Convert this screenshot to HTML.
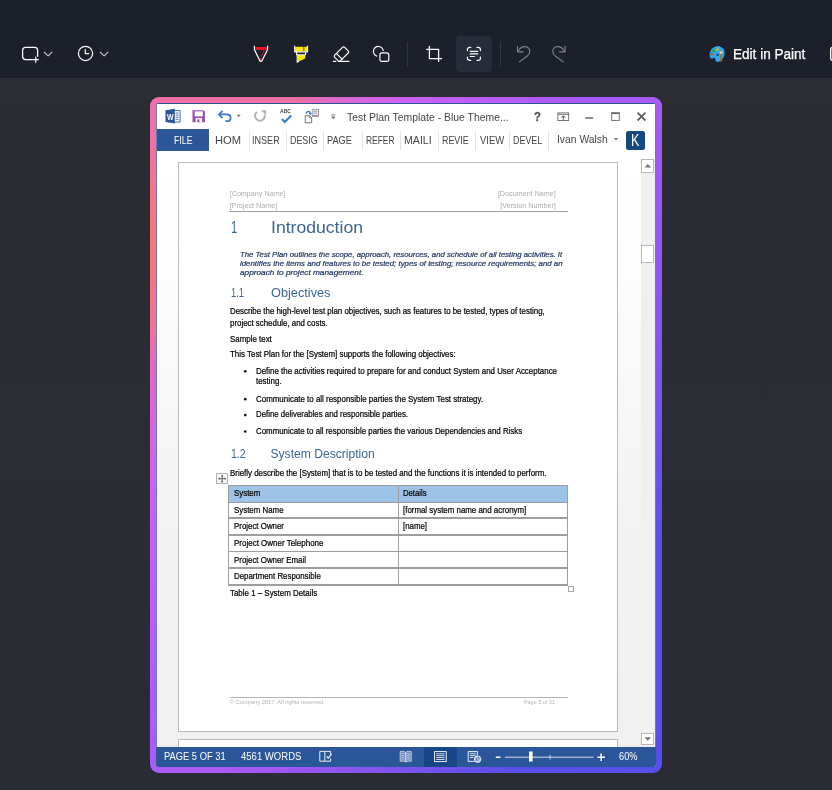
<!DOCTYPE html>
<html><head><meta charset="utf-8">
<style>
*{box-sizing:border-box;margin:0;padding:0}
html,body{width:832px;height:790px;overflow:hidden}
body{position:relative;background:linear-gradient(180deg,#2c2d32 0%,#2b2c33 30%,#2a2c35 100%);font-family:"Liberation Sans",sans-serif;color:#fff}
.t{position:absolute;white-space:nowrap;line-height:1}
.bd{-webkit-text-stroke:0.22px #000}
.bi{-webkit-text-stroke:0.2px #1f3560}
.b{position:absolute}
svg{position:absolute;overflow:visible}
#tb{position:absolute;left:0;top:0;width:832px;height:79px;background:#1c202b;border-bottom:1px solid #2d303b}
#frame{position:absolute;left:150px;top:97px;width:512px;height:676px;border-radius:9px;
 background:radial-gradient(ellipse 70px 115px at 0 148px,#fd7676 0%,rgba(253,118,118,0.75) 35%,rgba(253,118,118,0) 100%),linear-gradient(122.6deg,#f06fa8 0%,#ee6ea6 15.8%,#dc66d6 21.2%,#cc60f4 27.3%,#c45ff8 31.4%,#a95af8 45.6%,#a95af8 54%,#8a55f0 69%,#5a50e8 84%,#5650ec 100%)}
#win{position:absolute;left:6px;top:6px;width:500px;height:664px;background:#fff;border-radius:2px;overflow:hidden}
#w{position:absolute;left:-156px;top:-103px;width:832px;height:790px}
.gl{position:absolute;left:0;top:0;width:832px;height:790px;will-change:transform}
</style></head><body>
<div id="tb">
<svg width="832" height="78" viewBox="0 0 832 78" style="left:0;top:0" fill="none" stroke-linecap="round" stroke-linejoin="round">
<!-- new snip -->
<path d="M32.3 59.6H25.6a3 3 0 0 1-3-3V50.3a3 3 0 0 1 3-3H34.6a3 3 0 0 1 3 3V56.3" stroke="#fff" stroke-width="1.25"/>
<path d="M33.2 59.7H38.3M35.75 57.2V62.3" stroke="#fff" stroke-width="1.2"/>
<path d="M44.2 52.1L48.1 55.9L52 52.1" stroke="#c9cbd0" stroke-width="1.1"/>
<!-- delay clock -->
<circle cx="85.5" cy="53.4" r="7.1" stroke="#fff" stroke-width="1.25"/>
<path d="M85.3 49.6V53.7H88.7" stroke="#fff" stroke-width="1.2"/>
<path d="M100.2 52.1L104.1 55.9L108 52.1" stroke="#c9cbd0" stroke-width="1.1"/>
<!-- pen -->
<path d="M255.2 47H267.2V50H255.2Z" fill="#e81123" stroke="none"/>
<path d="M264.3 50.2L261.3 56.4" stroke="#e81123" stroke-width="1"/>
<circle cx="260.9" cy="59" r="1" fill="#e81123" stroke="none"/>
<path d="M254.4 46.2V49.6L259.7 60.6a1.3 1.3 0 0 0 2.4 0L267.6 49.6V46.2" stroke="#fff" stroke-width="1.2"/>
<!-- highlighter -->
<path d="M295.2 46.8H307V51.2H295.2Z" fill="#ffe600" stroke="none"/>
<path d="M303.8 46.8V51" stroke="#1c202b" stroke-width="0.7"/>
<path d="M297.6 55H305.2V58.6L297.6 62Z" fill="#ffe600" stroke="none"/>
<path d="M294.7 46.2V51.8H307.5V46.2" stroke="#fff" stroke-width="1.2"/>
<path d="M296.6 52V54.7H305.6V52" stroke="#fff" stroke-width="1.1"/>
<path d="M297.2 55V62.2L298.6 61.6" stroke="#fff" stroke-width="1.1"/>
<!-- eraser -->
<rect x="-7.05" y="-4.03" width="14.1" height="8.06" rx="1.5" transform="translate(341.45,54.1) rotate(-45)" stroke="#fff" stroke-width="1.15"/>
<path d="M336.4 53.5L342.1 59.2" stroke="#fff" stroke-width="1.15"/>
<path d="M333.3 61.4H335.8M338.6 61.4H349" stroke="#fff" stroke-width="1.15"/>
<!-- shapes -->
<path d="M376.6 56.1A5 5 0 1 1 383.3 50.6" stroke="#fff" stroke-width="1.15"/>
<rect x="379.9" y="52.9" width="8.9" height="8.4" rx="2.1" stroke="#fff" stroke-width="1.15"/>
<!-- separators -->
<path d="M407.6 42V66M500.6 42V66" stroke="#343949" stroke-width="1"/>
<!-- crop -->
<path d="M429.4 45.9V58.6H442M426.2 49.4H438.6V62" stroke="#fff" stroke-width="1.25" stroke-linecap="butt"/>
<!-- text actions button -->
<rect x="456" y="36" width="36" height="36" rx="4.5" fill="#272c3b" stroke="none"/>
<path d="M467.4 50.6V49.6a2.2 2.2 0 0 1 2.2-2.2H470.8M477 47.4H478.2a2.2 2.2 0 0 1 2.2 2.2V50.6M480.4 57.2V58.2a2.2 2.2 0 0 1-2.2 2.2H477M470.8 60.4H469.6a2.2 2.2 0 0 1-2.2-2.2V57.2" stroke="#fff" stroke-width="1.2"/>
<path d="M470.2 51.3H477.8M470.2 53.9H477.8M470.2 56.5H474.4" stroke="#fff" stroke-width="1.15"/>
<!-- undo / redo (disabled) -->
<path d="M517.5 46.2V51.8H523.1" stroke="#7c818d" stroke-width="1.15"/>
<path d="M517.9 51.4C519.6 48.2 522.4 46.5 525.2 46.6C528 46.7 529.9 49 529.8 51.8C529.7 53.8 528.6 55 527 56.2L519.3 61.9" stroke="#7c818d" stroke-width="1.15"/>
<path d="M565.1 46.2V51.8H559.5" stroke="#7c818d" stroke-width="1.15"/>
<path d="M564.7 51.4C563 48.2 560.2 46.5 557.4 46.6C554.6 46.7 552.7 49 552.8 51.8C552.9 53.8 554 55 555.6 56.2L563.3 61.9" stroke="#7c818d" stroke-width="1.15"/>
<!-- paint palette -->
<path d="M709.6 55.6C709.2 50.8 713.4 46.8 718.3 46.6C722.4 46.5 724.9 49.6 724.6 53.2C724.4 56.6 722.8 59.6 719.8 61.2C717.6 62.3 715 61.6 715.4 59.4C715.7 57.8 714.6 57.4 713.4 58.2C711.4 59.4 709.8 58 709.6 55.6Z" fill="#2aa7ee" stroke="none"/>
<path d="M711.5 49.6C713.6 47.4 716.8 46.4 719.6 46.8" stroke="#53c4f7" stroke-width="0.8"/>
<circle cx="711.9" cy="54.3" r="1.25" fill="#e5460c" stroke="none"/>
<circle cx="713.7" cy="50.9" r="1.3" fill="#3aa31c" stroke="none"/>
<circle cx="717.4" cy="49.6" r="1.3" fill="#f8b40a" stroke="none"/>
<circle cx="717.6" cy="55" r="0.95" fill="#1b2334" stroke="none"/>
<path d="M720.2 53.8H722L722.2 61.4H720.1Z" fill="#b06a1c" stroke="none"/>
<path d="M719.3 51.3H722.9L722.1 54H720.1Z" fill="#f3c27a" stroke="none"/>
<!-- cut-off icon at right edge -->
<rect x="830.7" y="47.5" width="12" height="12.7" rx="1.6" stroke="#fff" stroke-width="1.4"/>
</svg>

<div class="gl">
<span class="t" style="left:733.40px;top:48.00px;font-size:13.8px;color:#fff;transform:scaleX(0.9832);transform-origin:0 0;-webkit-text-stroke:0.25px #fff">Edit in Paint</span>
</div>
</div>
<div id="frame"><div id="win"><div id="w">
<!-- document background -->
<div class="b" style="left:156px;top:152px;width:500px;height:595px;background:linear-gradient(180deg,#ffffff 0%,#fdfdfd 20%,#f4f4f4 55%,#f0f0f0 100%)"></div>
<!-- window borders -->
<div class="b" style="left:156px;top:103px;width:500px;height:1px;background:#2b579a"></div>
<div class="b" style="left:156px;top:103px;width:1px;height:644px;background:#5f7fb8"></div>
<div class="b" style="left:655px;top:103px;width:1px;height:644px;background:#5f7fb8"></div>
<!-- FILE tab -->
<div class="b" style="left:157px;top:129px;width:51.8px;height:22.3px;background:#2b579a"></div>
<!-- tab separators -->
<div class="b" style="left:248.5px;top:130.5px;width:1px;height:19.5px;background:#e3e3e3"></div>
<div class="b" style="left:286px;top:130.5px;width:1px;height:19.5px;background:#e3e3e3"></div>
<div class="b" style="left:322.8px;top:130.5px;width:1px;height:19.5px;background:#e3e3e3"></div>
<div class="b" style="left:362px;top:130.5px;width:1px;height:19.5px;background:#e3e3e3"></div>
<div class="b" style="left:400px;top:130.5px;width:1px;height:19.5px;background:#e3e3e3"></div>
<div class="b" style="left:437.8px;top:130.5px;width:1px;height:19.5px;background:#e3e3e3"></div>
<div class="b" style="left:474.7px;top:130.5px;width:1px;height:19.5px;background:#e3e3e3"></div>
<div class="b" style="left:509.2px;top:130.5px;width:1px;height:19.5px;background:#e3e3e3"></div>
<div class="b" style="left:548px;top:130.5px;width:1px;height:19.5px;background:#e3e3e3"></div>
<!-- K avatar -->
<div class="b" style="left:625.8px;top:130.5px;width:19.1px;height:19.1px;background:#164a7e;border-radius:2.5px"></div>
<!-- page -->
<div class="b" style="left:178px;top:162px;width:440px;height:570px;background:#fff;border:1px solid #b9b9b9"></div>
<div class="b" style="left:178px;top:739px;width:440px;height:20px;background:#fff;border:1px solid #b9b9b9"></div>
<!-- scrollbar -->
<div class="b" style="left:640.5px;top:159px;width:14px;height:588px;background:#f0f0f0"></div>
<div class="b" style="left:640.5px;top:159px;width:13.5px;height:14px;background:#fff;border:1px solid #b8b8b8"></div>
<div class="b" style="left:640.5px;top:245px;width:13.5px;height:18px;background:#fff;border:1px solid #b8b8b8"></div>
<div class="b" style="left:640.5px;top:732.5px;width:13.5px;height:12px;background:#fff;border:1px solid #b8b8b8"></div>
<svg style="left:640.5px;top:159px" width="14" height="14"><path d="M3.5 8.5 L6.8 5 L10.1 8.5Z" fill="#777"/></svg>
<svg style="left:640.5px;top:732.5px" width="14" height="12"><path d="M3.5 4.3 L10.1 4.3 L6.8 7.8Z" fill="#777"/></svg>
<!-- header/footer rules -->
<div class="b" style="left:229px;top:211.1px;width:338.5px;height:1px;background:#a0a0a0"></div>
<div class="b" style="left:229.5px;top:696.6px;width:338px;height:1px;background:#b4b4b4"></div>
<!-- bullets -->
<svg width="832" height="790" style="left:0;top:0"><circle cx="245.25" cy="371.3" r="1.35" fill="#111"/><circle cx="245.25" cy="399.2" r="1.35" fill="#111"/><circle cx="245.25" cy="415.1" r="1.35" fill="#111"/><circle cx="245.25" cy="431.5" r="1.35" fill="#111"/></svg>
<!-- table -->
<div class="b" style="left:228.5px;top:485.2px;width:339.0px;height:17.0px;background:#9dc3e6"></div>
<div class="b" style="left:227.80px;top:484.50px;width:340.40px;height:1.4px;background:#9e9e9e"></div>
<div class="b" style="left:227.80px;top:501.50px;width:340.40px;height:1.4px;background:#9e9e9e"></div>
<div class="b" style="left:227.80px;top:517.40px;width:340.40px;height:1.4px;background:#9e9e9e"></div>
<div class="b" style="left:227.80px;top:534.30px;width:340.40px;height:1.4px;background:#9e9e9e"></div>
<div class="b" style="left:227.80px;top:551.10px;width:340.40px;height:1.4px;background:#9e9e9e"></div>
<div class="b" style="left:227.80px;top:567.30px;width:340.40px;height:1.4px;background:#9e9e9e"></div>
<div class="b" style="left:227.80px;top:584.30px;width:340.40px;height:1.4px;background:#9e9e9e"></div>
<div class="b" style="left:227.80px;top:484.50px;width:1.4px;height:101.20px;background:#9e9e9e"></div>
<div class="b" style="left:397.90px;top:484.50px;width:1.4px;height:101.20px;background:#9e9e9e"></div>
<div class="b" style="left:566.80px;top:484.50px;width:1.4px;height:101.20px;background:#9e9e9e"></div>
<!-- table anchor & handle -->
<div class="b" style="left:216.4px;top:473.2px;width:11.5px;height:11.2px;background:#f7f7f7;border:1px solid #b2b2b2"></div>
<svg style="left:0;top:0" width="832" height="790"><path d="M222.2 475.6V481.8M219.1 478.7H225.3" stroke="#444" stroke-width="0.8" fill="none"/><path d="M222.2 474.7L223.4 476.2H221ZM222.2 482.7L223.4 481.2H221ZM218.2 478.7L219.7 477.5V479.9ZM226.2 478.7L224.7 477.5V479.9Z" fill="#444"/></svg>
<div class="b" style="left:567.9px;top:585.6px;width:6.6px;height:6.6px;background:#fff;border:1px solid #a5a5a5"></div>
<!-- status bar -->
<div class="b" style="left:156px;top:747px;width:500px;height:20px;background:#2b579a"></div>
<div class="b" style="left:423.8px;top:747px;width:33.6px;height:20px;background:#19478a"></div>
<svg width="832" height="790" viewBox="0 0 832 790" style="left:0;top:0" fill="none">
<!-- Word logo -->
<path d="M174.2 110.6H180.1V122H174.2" fill="#fff" stroke="#2b579a" stroke-width="0.9"/>
<path d="M175.6 113H178.6M175.6 115.1H178.6M175.6 117.2H178.6M175.6 119.3H178.6" stroke="#2b579a" stroke-width="0.8"/>
<path d="M165.5 110.3L174.8 108.8V123.6L165.5 121.9Z" fill="#2b579a"/>
<!-- Save -->
<path d="M192.5 110.3H203.4L204.9 111.8V122.2H192.5Z" fill="#9a4fb4"/>
<rect x="194.7" y="111.4" width="8.1" height="5" fill="#fff"/>
<rect x="195.6" y="118.1" width="6.4" height="4.1" fill="#fff"/>
<rect x="197.3" y="119.4" width="2.1" height="2.8" fill="#9a4fb4"/>
<!-- Undo -->
<path d="M222.6 110.8L218.9 114.4L222.6 118" stroke="#3e7ac6" stroke-width="1.8"/>
<path d="M219.4 114.4H226.4C229 114.4 230.6 116 230.6 117.9C230.6 119.9 229 121.2 226.8 121.2H225.2" stroke="#3e7ac6" stroke-width="1.8"/>
<path d="M236.6 114.7H240.7L238.65 117.1Z" fill="#666"/>
<!-- Repeat (disabled) -->
<path d="M257.2 112A4.75 4.75 0 1 0 264.5 114.6" stroke="#b2b2b2" stroke-width="1.9"/>
<path d="M260.7 110.2H266.1V114.9Z" fill="#b2b2b2"/>
<!-- Spelling check -->
<path d="M281.8 118.9L284.8 121.9L291.2 115.6" stroke="#3e7ac6" stroke-width="2.1"/>
<!-- doc/comment icon -->
<rect x="312.2" y="109.3" width="6.3" height="6.2" fill="#e9e9e9" stroke="#8a8a8a" stroke-width="0.8"/>
<path d="M313.6 111.4H317.2M313.6 113.2H317.2" stroke="#8a8a8a" stroke-width="0.7"/>
<path d="M312 116.3H318.7" stroke="#777" stroke-width="0.9"/>
<path d="M305.2 115.7H309.6L311.7 117.8V122.8H305.2Z" fill="#fff" stroke="#666" stroke-width="0.9"/>
<path d="M309.4 115.7V118H311.7" stroke="#666" stroke-width="0.7"/>
<path d="M306 113.6C306.6 111 309.8 110.8 310.4 113.4" stroke="#3e7ac6" stroke-width="1.4"/>
<path d="M308.7 113.1H312.1L310.4 115.3Z" fill="#3e7ac6"/>
<!-- customize QAT -->
<path d="M331.2 114.9H335.3" stroke="#666" stroke-width="0.9"/>
<path d="M331.2 116.6H335.3L333.25 119.2Z" fill="#666"/>
<!-- ribbon display -->
<rect x="557.9" y="112.9" width="10.8" height="7.6" stroke="#666" stroke-width="0.9"/>
<path d="M557.9 114.4H568.7" stroke="#666" stroke-width="0.8"/>
<path d="M563.3 119.8V116M561.3 117.8L563.3 115.8L565.3 117.8" stroke="#555" stroke-width="1"/>
<!-- min / max / close -->
<path d="M585.3 118H593.2" stroke="#666" stroke-width="1.5"/>
<rect x="611.7" y="113.6" width="7.6" height="6.8" stroke="#666" stroke-width="0.9"/>
<path d="M611.2 113.1H619.8" stroke="#666" stroke-width="1.7"/>
<path d="M637.6 112.7L645.4 120.5M645.4 112.7L637.6 120.5" stroke="#606060" stroke-width="1.8"/>
<!-- user dropdown -->
<path d="M613.8 138.1H618.2L616 140.5Z" fill="#777"/>
<!-- status: proofing -->
<path d="M319.8 751.4H324.8V761.2H319.8Z M325.2 751.4H330.6V754.5M330.6 758.5V761.2H325.2" stroke="#fff" stroke-width="0.9"/>
<path d="M326.6 756.3L328.3 758.2L331.6 753.9" stroke="#fff" stroke-width="1.1"/>
<!-- read mode -->
<path d="M400.2 751.6C402.4 751 404.2 751.3 405.6 752.4V762C404.2 761 402.4 760.8 400.2 761.3Z M411.2 751.6C409 751 407.2 751.3 405.8 752.4V762C407.2 761 409 760.8 411.2 761.3Z" stroke="#dfe6f2" stroke-width="0.8" fill="rgba(255,255,255,0.28)"/>
<path d="M401.4 753.6H404.4M401.4 755.4H404.4M401.4 757.2H404.4M401.4 759H404.4M407 753.6H410M407 755.4H410M407 757.2H410M407 759H410" stroke="#dfe6f2" stroke-width="0.7"/>
<!-- print layout -->
<rect x="434.6" y="751.6" width="11.6" height="10" stroke="#fff" stroke-width="0.9"/>
<path d="M436.2 753.8H444.6M436.2 755.7H444.6M436.2 757.6H444.6M436.2 759.5H444.6" stroke="#fff" stroke-width="0.8"/>
<!-- web layout -->
<path d="M474.4 761.4H468.2V751.6H477.4V755.6" stroke="#fff" stroke-width="0.9"/>
<path d="M469.8 753.7H475.8M469.8 755.6H475.8M469.8 757.5H473.6" stroke="#fff" stroke-width="0.8"/>
<circle cx="477.6" cy="759.2" r="3.2" fill="#a9bbd6" stroke="#fff" stroke-width="0.9"/>
<path d="M475.8 757.6C477 758.4 477.2 759.6 476.4 761M478.4 756.4C478 757.8 479 758.6 480.4 758.4" stroke="#2b579a" stroke-width="0.7"/>
<!-- zoom slider -->
<path d="M495.8 757.2H500.4" stroke="#fff" stroke-width="1.6"/>
<path d="M505 757.2H593.7" stroke="#fff" stroke-width="0.8"/>
<path d="M550 754.8V759.6" stroke="#dfe6f2" stroke-width="0.8"/>
<rect x="529" y="751.5" width="3.6" height="10" fill="#fff"/>
<path d="M597.4 757.2H605M601.2 753.4V761" stroke="#fff" stroke-width="1.6"/>
</svg>


<div class="gl">
<span class="t" style="left:347.40px;top:111.00px;font-size:11.6px;color:#444;transform:scaleX(0.8977);transform-origin:0 0;">Test Plan Template - Blue Theme...</span>
<span class="t" style="left:173.50px;top:135.00px;font-size:11.5px;color:#fff;transform:scaleX(0.7614);transform-origin:0 0;">FILE</span>
<span class="t" style="left:214.90px;top:135.00px;font-size:11.5px;color:#444;transform:scaleX(0.9723);transform-origin:0 0;">HOM</span>
<span class="t" style="left:252.40px;top:135.00px;font-size:11.5px;color:#444;transform:scaleX(0.7879);transform-origin:0 0;">INSER</span>
<span class="t" style="left:290.00px;top:135.00px;font-size:11.5px;color:#444;transform:scaleX(0.7738);transform-origin:0 0;">DESIG</span>
<span class="t" style="left:327.30px;top:135.00px;font-size:11.5px;color:#444;transform:scaleX(0.8004);transform-origin:0 0;">PAGE</span>
<span class="t" style="left:365.70px;top:135.00px;font-size:11.5px;color:#444;transform:scaleX(0.7336);transform-origin:0 0;">REFER</span>
<span class="t" style="left:403.70px;top:135.00px;font-size:11.5px;color:#444;transform:scaleX(0.9219);transform-origin:0 0;">MAILI</span>
<span class="t" style="left:441.70px;top:135.00px;font-size:11.5px;color:#444;transform:scaleX(0.7736);transform-origin:0 0;">REVIE</span>
<span class="t" style="left:480.20px;top:135.00px;font-size:11.5px;color:#444;transform:scaleX(0.8234);transform-origin:0 0;">VIEW</span>
<span class="t" style="left:513.10px;top:135.00px;font-size:11.5px;color:#444;transform:scaleX(0.7768);transform-origin:0 0;">DEVEL</span>
<span class="t" style="left:556.80px;top:134.00px;font-size:11px;color:#444;transform:scaleX(0.9386);transform-origin:0 0;">Ivan Walsh</span>
<span class="t" style="left:631.30px;top:133.00px;font-size:16.6px;color:#fff;transform:scaleX(0.7583);transform-origin:0 0;">K</span>
<span class="t" style="left:166.90px;top:114.00px;font-size:8.2px;color:#fff;transform:scaleX(0.8404);transform-origin:0 0;font-weight:bold">W</span>
<span class="t" style="left:280.30px;top:109.00px;font-size:5.5px;color:#444;transform:scaleX(0.9227);transform-origin:0 0;font-weight:bold">ABC</span>
<span class="t" style="left:533.60px;top:111.00px;font-size:12.2px;color:#555;transform:scaleX(0.9258);transform-origin:0 0;font-weight:bold;-webkit-text-stroke:0.3px #555">?</span>
<span class="t" style="left:229.70px;top:190.00px;font-size:7.2px;color:#adadad;">[Company Name]</span>
<span class="t" style="left:229.70px;top:202.00px;font-size:7.2px;color:#adadad;">[Project Name]</span>
<span class="t" style="left:497.88px;top:190.00px;font-size:7.2px;color:#adadad;">[Document Name]</span>
<span class="t" style="left:500.27px;top:202.00px;font-size:7.2px;color:#adadad;">[Version Number]</span>
<span class="t" style="left:230.60px;top:219.00px;font-size:16.2px;color:#3a6693;transform:scaleX(0.6877);transform-origin:0 0;">1</span>
<span class="t" style="left:271.30px;top:219.00px;font-size:16.2px;color:#3a6693;transform:scaleX(1.0876);transform-origin:0 0;">Introduction</span>
<span class="t bi" style="left:240.10px;top:251.00px;font-size:7.4px;color:#1f3560;transform:scaleX(1.0508);transform-origin:0 0;font-style:italic">The Test Plan outlines the scope, approach, resources, and schedule of all testing activities. It</span>
<span class="t bi" style="left:240.10px;top:260.00px;font-size:7.4px;color:#1f3560;transform:scaleX(1.0625);transform-origin:0 0;font-style:italic">identifies the items and features to be tested; types of testing; resource requirements; and an</span>
<span class="t bi" style="left:240.10px;top:269.00px;font-size:7.4px;color:#1f3560;transform:scaleX(1.1173);transform-origin:0 0;font-style:italic">approach to project management.</span>
<span class="t" style="left:231.00px;top:287.00px;font-size:12.1px;color:#3a6693;transform:scaleX(0.7732);transform-origin:0 0;">1.1</span>
<span class="t" style="left:270.80px;top:287.00px;font-size:12.1px;color:#3a6693;transform:scaleX(1.0537);transform-origin:0 0;">Objectives</span>
<span class="t bd" style="left:230.20px;top:307.00px;font-size:8.6px;color:#000;transform:scaleX(0.9178);transform-origin:0 0;">Describe the high-level test plan objectives, such as features to be tested, types of testing,</span>
<span class="t bd" style="left:230.20px;top:319.00px;font-size:8.6px;color:#000;transform:scaleX(0.9171);transform-origin:0 0;">project schedule, and costs.</span>
<span class="t bd" style="left:230.20px;top:335.00px;font-size:8.6px;color:#000;transform:scaleX(0.9209);transform-origin:0 0;">Sample text</span>
<span class="t bd" style="left:230.20px;top:350.00px;font-size:8.6px;color:#000;transform:scaleX(0.9216);transform-origin:0 0;">This Test Plan for the [System] supports the following objectives:</span>
<span class="t bd" style="left:256.20px;top:367.00px;font-size:8.6px;color:#000;transform:scaleX(0.9212);transform-origin:0 0;">Define the activities required to prepare for and conduct System and User Acceptance</span>
<span class="t bd" style="left:256.20px;top:377.00px;font-size:8.6px;color:#000;transform:scaleX(0.9233);transform-origin:0 0;">testing.</span>
<span class="t bd" style="left:256.20px;top:395.00px;font-size:8.6px;color:#000;transform:scaleX(0.9226);transform-origin:0 0;">Communicate to all responsible parties the System Test strategy.</span>
<span class="t bd" style="left:256.20px;top:410.00px;font-size:8.6px;color:#000;transform:scaleX(0.9116);transform-origin:0 0;">Define deliverables and responsible parties.</span>
<span class="t bd" style="left:256.20px;top:427.00px;font-size:8.6px;color:#000;transform:scaleX(0.9181);transform-origin:0 0;">Communicate to all responsible parties the various Dependencies and Risks</span>
<span class="t" style="left:231.00px;top:448.00px;font-size:12.1px;color:#3a6693;transform:scaleX(0.8684);transform-origin:0 0;">1.2</span>
<span class="t" style="left:270.50px;top:448.00px;font-size:12.1px;color:#3a6693;">System Description</span>
<span class="t bd" style="left:230.30px;top:469.00px;font-size:8.6px;color:#000;transform:scaleX(0.9202);transform-origin:0 0;">Briefly describe the [System] that is to be tested and the functions it is intended to perform.</span>
<span class="t bd" style="left:233.80px;top:489.00px;font-size:8.6px;color:#000;transform:scaleX(0.9178);transform-origin:0 0;">System</span>
<span class="t bd" style="left:402.60px;top:489.00px;font-size:8.6px;color:#000;transform:scaleX(0.8980);transform-origin:0 0;">Details</span>
<span class="t bd" style="left:233.80px;top:506.00px;font-size:8.6px;color:#000;transform:scaleX(0.9191);transform-origin:0 0;">System Name</span>
<span class="t bd" style="left:402.60px;top:506.00px;font-size:8.6px;color:#000;transform:scaleX(0.9186);transform-origin:0 0;">[formal system name and acronym]</span>
<span class="t bd" style="left:233.80px;top:522.00px;font-size:8.6px;color:#000;transform:scaleX(0.9182);transform-origin:0 0;">Project Owner</span>
<span class="t bd" style="left:402.60px;top:522.00px;font-size:8.6px;color:#000;transform:scaleX(0.9132);transform-origin:0 0;">[name]</span>
<span class="t bd" style="left:233.80px;top:539.00px;font-size:8.6px;color:#000;transform:scaleX(0.9290);transform-origin:0 0;">Project Owner Telephone</span>
<span class="t bd" style="left:233.80px;top:556.00px;font-size:8.6px;color:#000;transform:scaleX(0.9179);transform-origin:0 0;">Project Owner Email</span>
<span class="t bd" style="left:233.80px;top:572.00px;font-size:8.6px;color:#000;transform:scaleX(0.9176);transform-origin:0 0;">Department Responsible</span>
<span class="t bd" style="left:230.30px;top:589.00px;font-size:8.6px;color:#000;transform:scaleX(0.9220);transform-origin:0 0;">Table 1 – System Details</span>
<span class="t" style="left:229.60px;top:700.00px;font-size:5.75px;color:#b4b4b4;">© Company 2017. All rights reserved.</span>
<span class="t" style="left:523.60px;top:700.00px;font-size:5.75px;color:#b4b4b4;transform:scaleX(0.9410);transform-origin:0 0;">Page 5 of 31.</span>
<span class="t" style="left:163.50px;top:752.00px;font-size:10px;color:#fff;transform:scaleX(0.9340);transform-origin:0 0;">PAGE 5 OF 31</span>
<span class="t" style="left:240.70px;top:752.00px;font-size:10px;color:#fff;transform:scaleX(0.9533);transform-origin:0 0;">4561 WORDS</span>
<span class="t" style="left:619.20px;top:752.00px;font-size:10px;color:#fff;transform:scaleX(0.9243);transform-origin:0 0;">60%</span>
</div>
</div></div></div>
</body></html>
